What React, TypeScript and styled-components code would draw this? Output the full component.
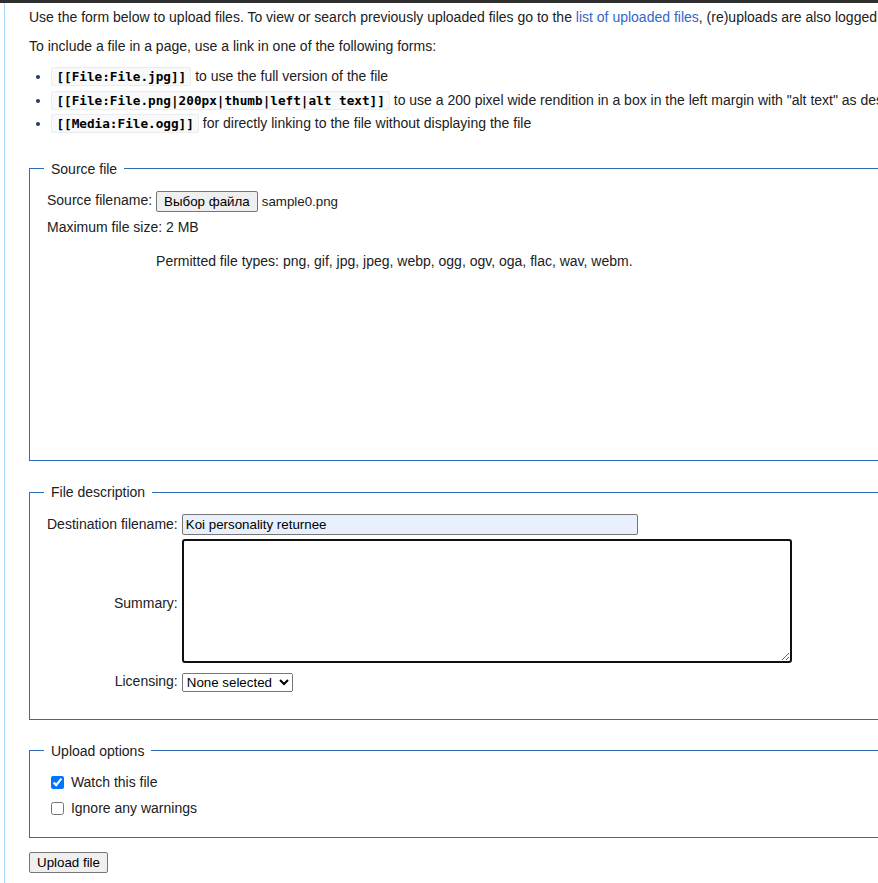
import React from "react";
import styled, { createGlobalStyle } from "styled-components";

const GlobalStyle = createGlobalStyle`
  html, body {
    margin: 0;
    padding: 0;
    overflow: hidden;
    background: #fff;
  }
  body {
    font-family: "Liberation Sans", Arial, sans-serif;
    color: #202122;
  }
`;

const TopBar = styled.div`
  height: 3px;
  background: #2f2f2f;
`;

const Page = styled.div`
  display: flex;
  width: 1700px;
`;

const Gutter = styled.div`
  flex: none;
  width: 4px;
`;

const Content = styled.main`
  flex: none;
  width: 1600px;
  border-left: 1px solid #a7d7f9;
  padding: 0 0 20px 24px;
  font-size: 14px;
  line-height: 1.6;
`;

const Intro = styled.p`
  margin: 7px 0 7px;
  &:first-child {
    margin-top: 3px;
  }
`;

const Link = styled.a`
  color: #36c;
  text-decoration: none;
`;

const Forms = styled.ul`
  margin: 7px 0 0 22.4px;
  padding: 0;
`;

const FormItem = styled.li`
  margin-bottom: 1.4px;
  &::marker {
    color: #233c6a;
  }
`;

const Code = styled.code`
  font-family: "DejaVu Sans Mono", monospace;
  font-size: 12.7px;
  font-weight: bold;
  color: #000;
  background: #f8f9fa;
  border: 1px solid #eaecf0;
  border-radius: 2px;
  padding: 1px 4px;
`;

const Fieldset = styled.fieldset<{ $top?: number }>`
  margin: ${({ $top }) => $top ?? 20}px 0 0;
  padding: 0 14px 14px;
  border: 1px solid #2e6db4;
  min-width: 0;
`;

const Legend = styled.legend`
  padding: 0 7px;
  font-size: 14px;
`;

const SourceBody = styled.div`
  min-height: 260px;
`;

const FormTable = styled.table<{ $bottom?: number }>`
  margin-top: 6px;
  margin-bottom: ${({ $bottom }) => $bottom ?? 0}px;
  border-spacing: 2px;
  font-size: 14px;
  line-height: 1.6;
`;

const LabelCell = styled.td`
  padding: 1px;
  text-align: right;
  vertical-align: middle;
  white-space: nowrap;
`;

const InputCell = styled.td<{ $top?: number }>`
  padding: ${({ $top }) => $top ?? 1}px 1px 1px;
  vertical-align: middle;
  white-space: nowrap;
`;

const FullCell = styled.td`
  padding: 1px;
`;

const NativeButton = styled.button`
  font-family: "Liberation Sans", Arial, sans-serif;
  font-size: 13.33px;
  color: #000;
  background: #efefef;
  border: 1px solid #767676;
  border-radius: 2px;
  padding: 1px 7px;
  height: 21px;
  vertical-align: middle;
`;

const FileName = styled.span`
  font-size: 13.33px;
  margin-left: 4px;
  vertical-align: middle;
`;

const TextInput = styled.input`
  box-sizing: border-box;
  width: 456px;
  height: 21px;
  padding: 1px 3px;
  border: 1px solid #767676;
  border-radius: 2px;
  background: #e8f0fe;
  font-family: "Liberation Sans", Arial, sans-serif;
  font-size: 13.33px;
  color: #000;
  vertical-align: middle;
`;

const SummaryArea = styled.textarea`
  display: block;
  box-sizing: border-box;
  width: 610px;
  height: 124px;
  margin: 0 0 3px;
  border: 2px solid #101010;
  border-radius: 3px;
  padding: 2px;
  font-family: "Liberation Sans", Arial, sans-serif;
  font-size: 13.33px;
  outline: none;
  resize: both;
`;

const LicenseSelect = styled.select`
  width: 111px;
  font-family: "Liberation Sans", Arial, sans-serif;
  font-size: 13.33px;
  color: #000;
  vertical-align: middle;
`;

const Check = styled.input`
  margin: 3px 3px 3px 4px;
  vertical-align: -2px;
`;

const Submit = styled.div`
  margin-top: 12px;
`;

export default function App() {
  return (
    <>
      <GlobalStyle />
      <TopBar />
      <Page>
        <Gutter />
        <Content>
          <Intro>
            Use the form below to upload files. To view or search previously uploaded files go to
            the <Link href="#">list of uploaded files</Link>, (re)uploads are also logged in the{" "}
            <Link href="#">upload log</Link>, deletions in the <Link href="#">deletion log</Link>.
          </Intro>
          <Intro>To include a file in a page, use a link in one of the following forms:</Intro>
          <Forms>
            <FormItem>
              <Code>[[File:File.jpg]]</Code> to use the full version of the file
            </FormItem>
            <FormItem>
              <Code>[[File:File.png|200px|thumb|left|alt text]]</Code> to use a 200 pixel wide
              rendition in a box in the left margin with "alt text" as description
            </FormItem>
            <FormItem>
              <Code>[[Media:File.ogg]]</Code> for directly linking to the file without displaying
              the file
            </FormItem>
          </Forms>

          <Fieldset $top={23}>
            <Legend>Source file</Legend>
            <SourceBody>
              <FormTable>
                <tbody>
                  <tr>
                    <LabelCell>Source filename:</LabelCell>
                    <InputCell>
                      <NativeButton type="button">Выбор файла</NativeButton>
                      <FileName>sample0.png</FileName>
                    </InputCell>
                  </tr>
                  <tr>
                    <FullCell colSpan={2}>Maximum file size: 2 MB</FullCell>
                  </tr>
                  <tr>
                    <td />
                    <InputCell $top={9}>
                      Permitted file types: png, gif, jpg, jpeg, webp, ogg, ogv, oga, flac, wav,
                      webm.
                    </InputCell>
                  </tr>
                </tbody>
              </FormTable>
            </SourceBody>
          </Fieldset>

          <Fieldset>
            <Legend>File description</Legend>
            <FormTable $bottom={9}>
              <tbody>
                <tr>
                  <LabelCell>Destination filename:</LabelCell>
                  <InputCell>
                    <TextInput type="text" defaultValue="Koi personality returnee" />
                  </InputCell>
                </tr>
                <tr>
                  <LabelCell>Summary:</LabelCell>
                  <InputCell>
                    <SummaryArea />
                  </InputCell>
                </tr>
                <tr>
                  <LabelCell>Licensing:</LabelCell>
                  <InputCell>
                    <LicenseSelect defaultValue="none">
                      <option value="none">None selected</option>
                    </LicenseSelect>
                  </InputCell>
                </tr>
              </tbody>
            </FormTable>
          </Fieldset>

          <Fieldset>
            <Legend>Upload options</Legend>
            <FormTable>
              <tbody>
                <tr>
                  <InputCell>
                    <Check type="checkbox" id="watch" defaultChecked />{" "}
                    <label htmlFor="watch">Watch this file</label>
                  </InputCell>
                </tr>
                <tr>
                  <InputCell>
                    <Check type="checkbox" id="ignore" />{" "}
                    <label htmlFor="ignore">Ignore any warnings</label>
                  </InputCell>
                </tr>
              </tbody>
            </FormTable>
          </Fieldset>

          <Submit>
            <NativeButton type="submit">Upload file</NativeButton>
          </Submit>
        </Content>
      </Page>
    </>
  );
}
